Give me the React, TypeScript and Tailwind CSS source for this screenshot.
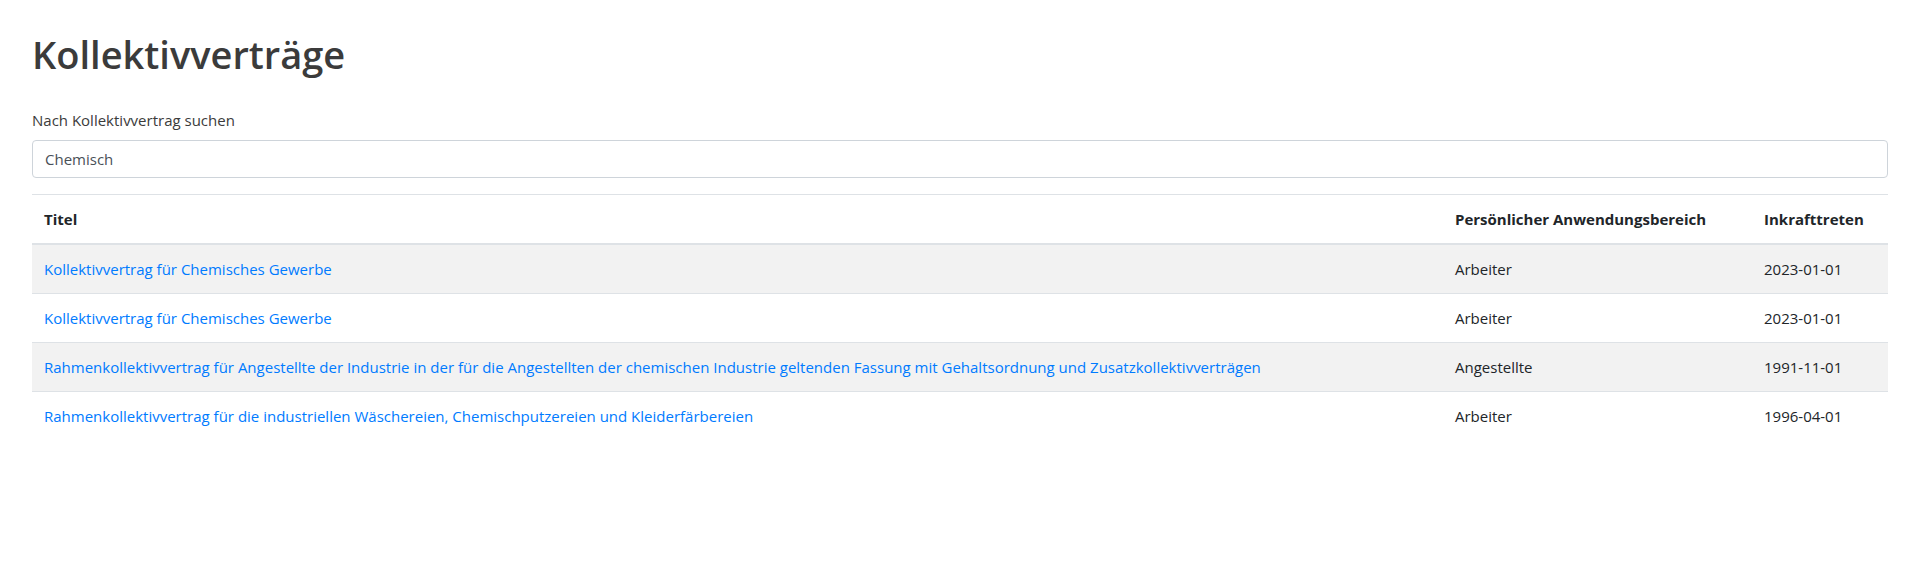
import { useState } from "react";

type Vertrag = {
  id: number;
  titel: string;
  bereich: string;
  inkraft: string;
};

const rows: Vertrag[] = [
  { id: 1, titel: "Kollektivvertrag für Chemisches Gewerbe", bereich: "Arbeiter", inkraft: "2023-01-01" },
  { id: 2, titel: "Kollektivvertrag für Chemisches Gewerbe", bereich: "Arbeiter", inkraft: "2023-01-01" },
  {
    id: 3,
    titel:
      "Rahmenkollektivvertrag für Angestellte der Industrie in der für die Angestellten der chemischen Industrie geltenden Fassung mit Gehaltsordnung und Zusatzkollektivverträgen",
    bereich: "Angestellte",
    inkraft: "1991-11-01",
  },
  {
    id: 4,
    titel: "Rahmenkollektivvertrag für die industriellen Wäschereien, Chemischputzereien und Kleiderfärbereien",
    bereich: "Arbeiter",
    inkraft: "1996-04-01",
  },
];

export default function App() {
  const [q, setQ] = useState("Chemisch");

  return (
    <div className="min-h-[572px] bg-white px-8 pt-[30px] font-['Segoe_UI','Open_Sans',sans-serif] text-[15px] leading-6 text-[#212529]">
      <h1 className="mb-[30px] text-[38px] font-semibold leading-[48px] text-[#3b3b3b]">Kollektivverträge</h1>

      <div className="mb-4">
        <label htmlFor="suche" className="mb-2 block text-[#3b3b3b]">
          Nach Kollektivvertrag suchen
        </label>
        <input
          id="suche"
          value={q}
          onChange={(e) => setQ(e.target.value)}
          className="block h-[38px] w-full rounded-[4px] border border-[#ced4da] px-3 py-1.5 text-[#495057] outline-none"
        />
      </div>

      <table className="w-full">
        <thead>
          <tr className="text-left">
            <th className="border-t border-b-2 border-[#dee2e6] p-3 font-bold">Titel</th>
            <th className="w-[309px] border-t border-b-2 border-[#dee2e6] p-3 font-bold">Persönlicher Anwendungsbereich</th>
            <th className="w-[136px] border-t border-b-2 border-[#dee2e6] p-3 font-bold">Inkrafttreten</th>
          </tr>
        </thead>
        <tbody>
          {rows.map((r, i) => (
            <tr key={r.id} className={i % 2 === 0 ? "bg-[#f2f2f2]" : ""}>
              <td className={"p-3 " + (i > 0 ? "border-t border-[#dee2e6]" : "")}>
                <a href="#" className="text-[#007bff] hover:underline">
                  {r.titel}
                </a>
              </td>
              <td className={"p-3 " + (i > 0 ? "border-t border-[#dee2e6]" : "")}>{r.bereich}</td>
              <td className={"p-3 " + (i > 0 ? "border-t border-[#dee2e6]" : "")}>{r.inkraft}</td>
            </tr>
          ))}
        </tbody>
      </table>
    </div>
  );
}
